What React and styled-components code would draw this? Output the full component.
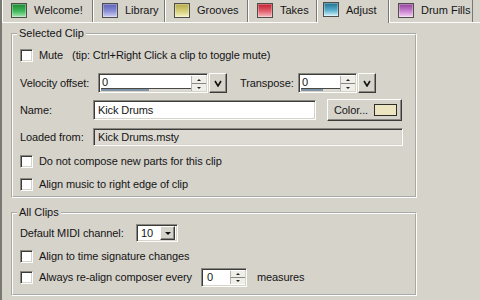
import React from 'react';
import styled, { createGlobalStyle, css } from 'styled-components';

const GlobalStyle = createGlobalStyle`
  html, body {
    margin: 0;
    padding: 0;
  }
  body {
    width: 480px;
    height: 300px;
    overflow: hidden;
    background: #d6d3cb;
    font-family: "Liberation Sans", Arial, sans-serif;
    font-size: 11px;
    color: #151515;
  }
`;

const sunken = css`
  box-sizing: border-box;
  border: 1px solid;
  border-color: #8a8882 #fdfdfb #fdfdfb #8a8882;
  box-shadow: inset 1px 1px 0 #3c3b38, inset -1px -1px 0 #d6d3cb;
`;

const raised = css`
  box-sizing: border-box;
  border: 1px solid;
  border-color: #fdfdfb #3c3b38 #3c3b38 #fdfdfb;
  box-shadow: inset -1px -1px 0 #8a8882;
  background: #d6d3cb;
`;

const Window = styled.div`
  width: 480px;
  height: 300px;
  box-sizing: border-box;
  display: flex;
  flex-direction: column;
  border-left: 2px solid #7a7872;
  background: #d6d3cb;
`;

const TabBar = styled.div`
  display: flex;
  align-items: flex-end;
  height: 22px;
`;

const Tab = styled.div`
  position: relative;
  z-index: ${p => (p.$active ? 2 : 1)};
  box-sizing: border-box;
  width: ${p => p.$w}px;
  height: ${p => (p.$active ? 23 : 22)}px;
  margin-bottom: ${p => (p.$active ? -1 : 0)}px;
  padding: 0 0 ${p => (p.$active ? 4 : 2)}px ${p => (p.$active ? 5 : 8)}px;
  display: flex;
  align-items: center;
  gap: 7px;
  background: #d6d3cb;
  border-left: 1px solid #fdfdfb;
  border-right: 1px solid #7a7872;
  white-space: nowrap;
`;

const TabIcon = styled.span`
  flex: none;
  box-sizing: border-box;
  width: 16px;
  height: 15px;
  border: 1px solid #4e4d4a;
  background: linear-gradient(${p => p.$from} 0%, ${p => p.$mid} 55%, ${p => p.$to} 100%);
  box-shadow: inset 0 0 0 1px rgba(255, 255, 255, 0.3);
`;

const Panel = styled.div`
  flex: 1;
  border-top: 1px solid #fdfdfb;
  padding: 4px 0 0 9px;
`;

const GroupBox = styled.fieldset`
  box-sizing: border-box;
  width: 406px;
  margin: ${p => p.$gap || 0}px 0 0;
  padding: 0 0 ${p => p.$pb || 0}px 7px;
  border: 2px groove #fdfdfb;
  display: flex;
  flex-direction: column;
`;

const Legend = styled.legend`
  margin-left: -3px;
  padding: 0 2px;
  line-height: 13px;
`;

const Row = styled.div`
  height: ${p => p.$h}px;
  display: flex;
  align-items: center;
  white-space: nowrap;
  letter-spacing: -0.1px;
`;

const Label = styled.span`
  flex: none;
  width: ${p => p.$w}px;
  margin-left: ${p => p.$ml || 0}px;
`;

const Check = styled.span`
  ${sunken};
  flex: none;
  width: 13px;
  height: 13px;
  margin-right: 6px;
  background: #fff;
`;

const Tip = styled.span`
  margin-left: 9px;
`;

const SliderField = styled.div`
  ${sunken};
  display: flex;
  width: ${p => p.$w}px;
  height: 20px;
  background: #fff;
  padding: 2px 1px 1px 2px;
`;

const ValueArea = styled.div`
  flex: 1;
  display: flex;
  flex-direction: column;
`;

const ValueText = styled.div`
  flex: 1;
  line-height: ${p => p.$lh || 12}px;
  padding-left: 1px;
`;

const Track = styled.div`
  height: 3px;
  border-top: 1px solid #4a4946;
  background: #dcdad4;
  display: flex;
`;

const TrackFill = styled.div`
  background: #7f93a6;
`;

const Spinner = styled.div`
  flex: none;
  width: 14px;
  display: flex;
  flex-direction: column;
  border-left: 1px solid #b5b3ad;
`;

const SpinHalf = styled.div`
  flex: 1;
  display: flex;
  align-items: center;
  justify-content: center;
  background: #efeee9;
  & + & {
    border-top: 1px solid #8a8882;
  }
  &::after {
    content: '';
    width: 0;
    height: 0;
    border-left: 2px solid transparent;
    border-right: 2px solid transparent;
    ${p => (p.$up ? 'border-bottom: 2px solid #222;' : 'border-top: 2px solid #222;')}
  }
`;

const VButton = styled.div`
  ${raised};
  flex: none;
  width: 18px;
  height: 20px;
  margin-left: 1px;
  display: flex;
  align-items: center;
  justify-content: center;
`;

const TextInput = styled.div`
  ${sunken};
  width: ${p => p.$w}px;
  height: ${p => p.$h}px;
  padding: 0 4px;
  display: flex;
  align-items: center;
  background: ${p => (p.$disabled ? '#dddad3' : '#fff')};
`;

const ColorButton = styled.div`
  ${raised};
  width: 75px;
  height: 22px;
  margin-left: 11px;
  padding: 0 4px 0 6px;
  display: flex;
  align-items: center;
  justify-content: space-between;
`;

const Swatch = styled.span`
  width: 23px;
  height: 12px;
  box-sizing: border-box;
  border: 1px solid #2e2d2a;
  background: #ede4c0;
`;

const Select = styled.div`
  ${sunken};
  width: 42px;
  height: 18px;
  padding: 2px 2px 2px 4px;
  display: flex;
  align-items: center;
  justify-content: space-between;
  background: #fff;
`;

const DropButton = styled.div`
  ${raised};
  width: 15px;
  height: 14px;
  display: flex;
  align-items: center;
  justify-content: center;
  &::after {
    content: '';
    border-left: 3px solid transparent;
    border-right: 3px solid transparent;
    border-top: 3px solid #111;
  }
`;

const SpinInput = styled.div`
  ${sunken};
  width: 46px;
  height: 19px;
  margin-left: 9px;
  padding: 2px 1px 2px 4px;
  display: flex;
  background: #fff;
`;

const Units = styled.span`
  margin-left: 10px;
`;

const tabs = [
  { name: 'Welcome!', w: 91, c: ['#1d8a34', '#3fb85a', '#a8e6b2'] },
  { name: 'Library', w: 72, c: ['#5b60b8', '#8a8fd6', '#cfd1f2'] },
  { name: 'Grooves', w: 83, c: ['#b3a948', '#d6d07a', '#f5f3c6'] },
  { name: 'Takes', w: 69, c: ['#c01e30', '#e2606c', '#f9bcc2'] },
  { name: 'Adjust', w: 72, c: ['#1d6f8e', '#58aecb', '#d3f3fc'], active: true },
  { name: 'Drum Fills', w: 84, c: ['#93409b', '#c983cf', '#f5d3f5'] },
];

const Chevron = () => (
  <svg width="8" height="7" viewBox="0 0 8 7">
    <polyline points="1,1 4,6 7,1" fill="none" stroke="#111" strokeWidth="1.6" />
  </svg>
);

const Slider = ({ w, fill }) => (
  <SliderField $w={w}>
    <ValueArea>
      <ValueText>0</ValueText>
      <Track>
        <TrackFill style={{ width: fill }} />
      </Track>
    </ValueArea>
    <Spinner>
      <SpinHalf $up />
      <SpinHalf />
    </Spinner>
  </SliderField>
);

export default function App() {
  return (
    <Window>
      <GlobalStyle />
      <TabBar>
        {tabs.map(t => (
          <Tab key={t.name} $w={t.w} $active={t.active}>
            <TabIcon $from={t.c[0]} $mid={t.c[1]} $to={t.c[2]} />
            {t.name}
          </Tab>
        ))}
      </TabBar>
      <Panel>
        <GroupBox>
          <Legend>Selected Clip</Legend>
          <Row $h={30}>
            <Check />
            Mute
            <Tip>(tip: Ctrl+Right Click a clip to toggle mute)</Tip>
          </Row>
          <Row $h={26}>
            <Label $w={78}>Velocity offset:</Label>
            <Slider w={110} fill={48} />
            <VButton><Chevron /></VButton>
            <Label $w={58} $ml={13}>Transpose:</Label>
            <Slider w={59} fill={22} />
            <VButton><Chevron /></VButton>
          </Row>
          <Row $h={28}>
            <Label $w={73}>Name:</Label>
            <TextInput $w={223} $h={20}>Kick Drums</TextInput>
            <ColorButton>
              Color...
              <Swatch />
            </ColorButton>
          </Row>
          <Row $h={26}>
            <Label $w={73}>Loaded from:</Label>
            <TextInput $w={310} $h={18} $disabled>Kick Drums.msty</TextInput>
          </Row>
          <Row $h={22}>
            <Check />
            Do not compose new parts for this clip
          </Row>
          <Row $h={24}>
            <Check />
            Align music to right edge of clip
          </Row>
        </GroupBox>
        <GroupBox $gap={8} $pb={5}>
          <Legend>All Clips</Legend>
          <Row $h={28}>
            <Label $w={116}>Default MIDI channel:</Label>
            <Select>
              10
              <DropButton />
            </Select>
          </Row>
          <Row $h={18}>
            <Check />
            Align to time signature changes
          </Row>
          <Row $h={24}>
            <Check />
            Always re-align composer every
            <SpinInput>
              <ValueText $lh={13}>0</ValueText>
              <Spinner>
                <SpinHalf $up />
                <SpinHalf />
              </Spinner>
            </SpinInput>
            <Units>measures</Units>
          </Row>
        </GroupBox>
      </Panel>
    </Window>
  );
}
